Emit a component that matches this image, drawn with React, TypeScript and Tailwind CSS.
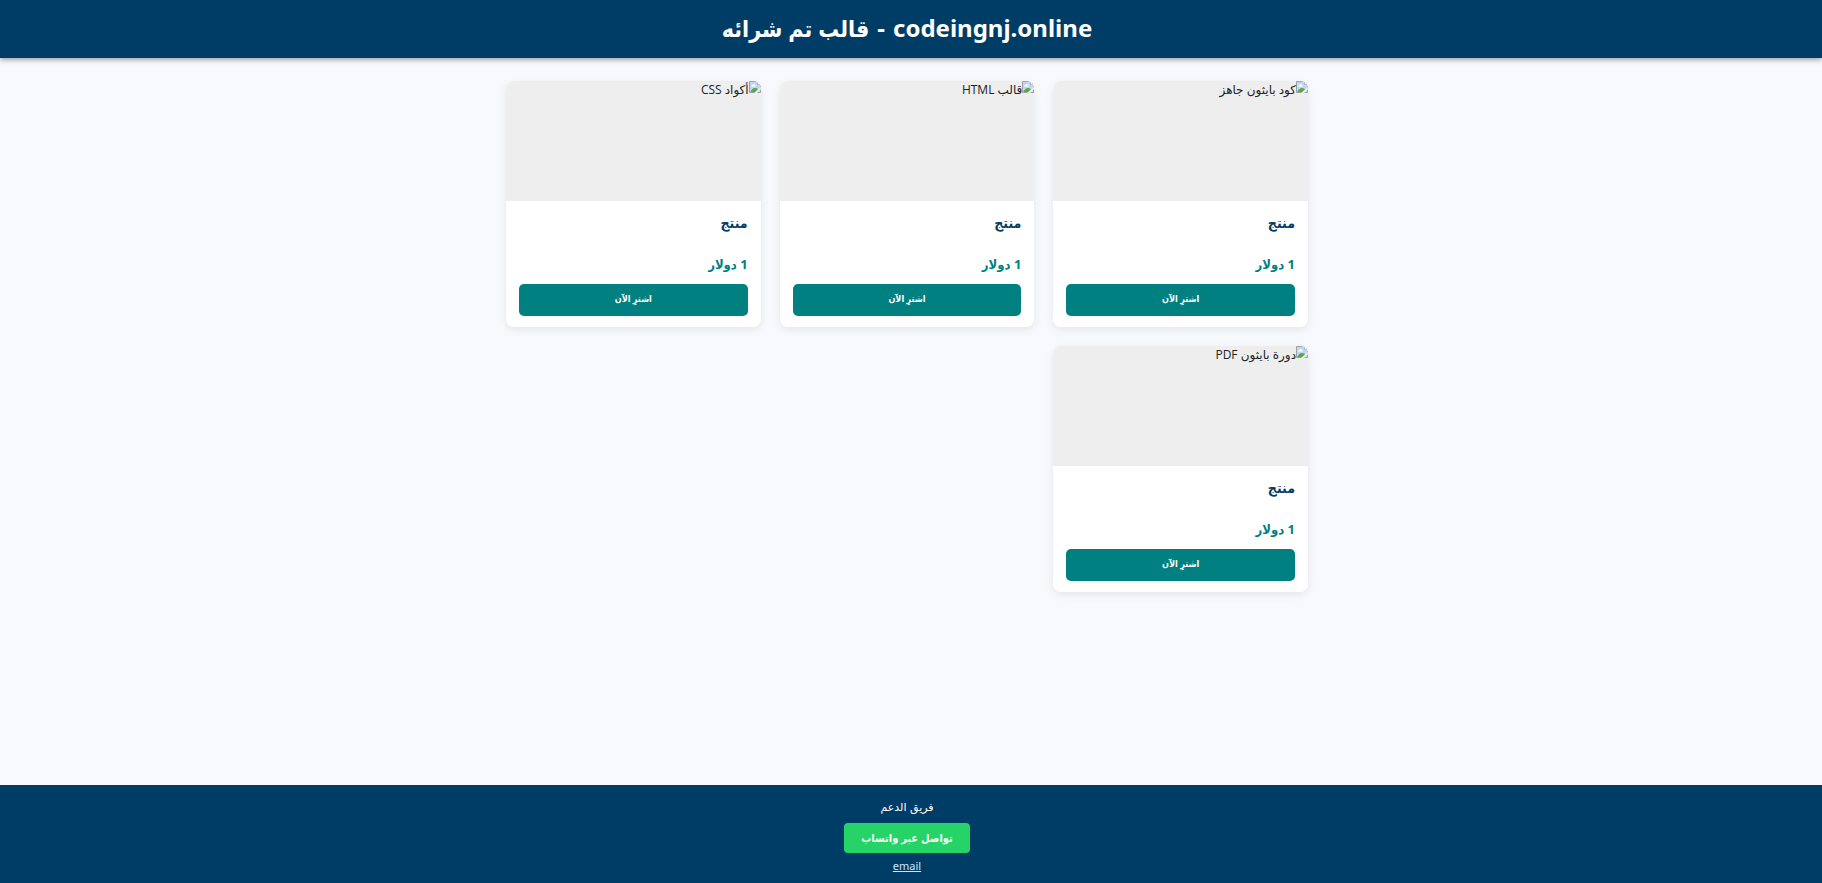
import React from "react";

const products = ["كود بايثون جاهز", "قالب HTML", "أكواد CSS", "دورة بايثون PDF"];

function BrokenImage() {
  return (
    <svg width="12" height="12" viewBox="0 0 12 12" className="shrink-0" aria-hidden="true">
      <path d="M0.5 0.5H8.5L11.5 3.5V11.5H0.5Z" fill="#c3d5f5" />
      <path d="M2 5.500Q2 4 3.500 4Q4 2.500 5.300 3.500Q6.800 3.500 6.500 5.500Z" fill="#fff" />
      <path d="M1 11.500Q3 7 6 7Q9 7 9.500 9.500L7 11.500Z" fill="#53ab3c" />
      <path d="M0.5 11.500V0.500H8.500L11.500 3.500V11.500H0.500" fill="none" stroke="#9ba1aa" />
      <path d="M8.500 0.500V3.500H11.500Z" fill="#fff" stroke="#9ba1aa" strokeWidth="0.7" />
      <path d="M6 12.500L12.500 6.500" stroke="#eeeeee" strokeWidth="2" />
    </svg>
  );
}

function ProductCard({ alt }: { alt: string }) {
  return (
    <article className="overflow-hidden rounded-lg bg-white shadow-[0_3px_9px_rgba(0,0,0,0.08)]">
      <div className="flex h-[120px] items-start bg-[#eeeeee] font-['Open_Sans','DejaVu_Sans',sans-serif] text-[12px] leading-[18px] text-[#222222]">
        <BrokenImage />
        <span>{alt}</span>
      </div>
      <div className="px-[13px] pt-[11px] pb-[11px]">
        <h2 className="text-[14px] leading-[22px] font-bold text-[#003d66]">منتج</h2>
        <p className="mt-[19px] text-[13px] leading-[22px] font-bold text-[#008080]">1 دولار</p>
        <button className="mt-[9px] flex h-8 w-full justify-center rounded-[5px] bg-[#008080] text-[9px] leading-[30px] font-bold text-white">
          اشترِ الآن
        </button>
      </div>
    </article>
  );
}

export default function App() {
  return (
    <div
      dir="rtl"
      className="flex min-h-screen flex-col bg-[#f8f9fd] font-['Noto_Sans','DejaVu_Sans_Condensed','DejaVu_Sans',sans-serif]"
    >
      <header className="bg-[#003d66] pt-[11px] pb-[13px] pr-2 text-center text-white shadow-[0_2px_5px_rgba(0,0,0,0.35)]">
        <h1 dir="ltr" className="flex items-baseline justify-center gap-2 text-[24px] leading-[34px] font-bold">
          <span dir="rtl" className="text-[23px]">
            قالب تم شرائه
          </span>
          <span>-</span>
          <span>codeingnj.online</span>
        </h1>
      </header>
      <main className="grow py-[23px] pr-2">
        <div className="mx-auto grid max-w-[802px] grid-cols-[repeat(auto-fill,minmax(220px,1fr))] gap-[19px]">
          {products.map((alt) => (
            <ProductCard key={alt} alt={alt} />
          ))}
        </div>
      </main>
      <footer className="flex flex-col items-center bg-[#003d66] pt-[14px] pr-2 pb-2 text-white">
        <p className="font-['DejaVu_Sans',sans-serif] text-[11px] leading-[18px]">فريق الدعم</p>
        <a
          href="#whatsapp"
          className="mt-[6px] rounded-[4px] bg-[#25d366] px-[17px] text-[11px] leading-[30px] font-bold"
        >
          تواصل عبر واتساب
        </a>
        <a href="#email" className="mt-1 text-[11px] leading-[18px] text-[#cce5ff] underline">
          email
        </a>
      </footer>
    </div>
  );
}
